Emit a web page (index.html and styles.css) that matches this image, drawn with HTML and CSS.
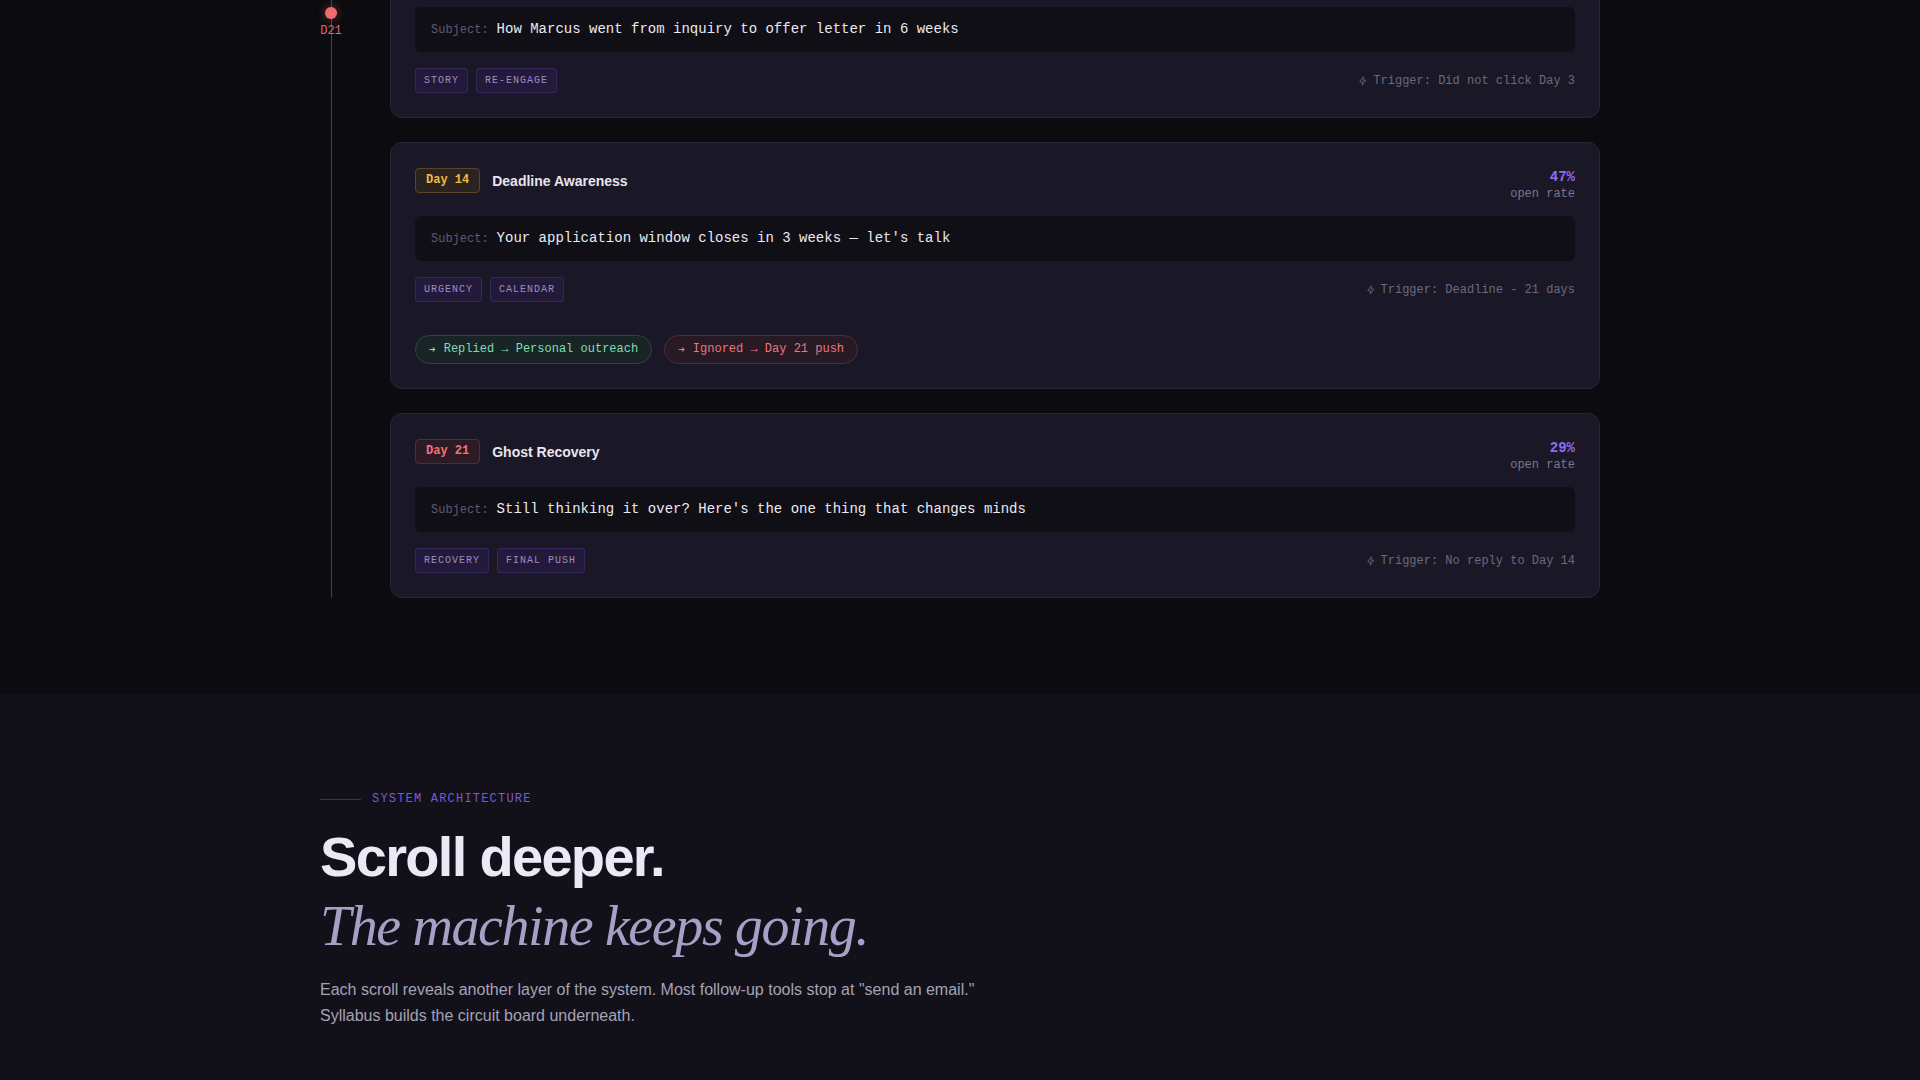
FILE: index.html
```html
<!DOCTYPE html>
<html>

<head>
    <meta charset="utf-8">
    <meta name="viewport" content="width=device-width, initial-scale=1.0">
    <title>Syllabus - Follow-up sequence</title>
    <link rel="stylesheet" href="styles.css">
</head>

<body>
    <section class="sequence">
        <div class="flow">
            <div class="timeline">
                <div class="marker">
                    <span class="dot"></span>
                    <span class="marker-label">D21</span>
                </div>
            </div>

            <div class="cards">
                <div class="card">
                    <div class="card-head">
                        <div class="card-title">
                            <span class="badge badge-blue">Day 7</span>
                            <h3>Success Story</h3>
                        </div>
                        <div class="rate">
                            <b>58%</b>
                            <span>open rate</span>
                        </div>
                    </div>
                    <div class="subject"><span class="subject-label">Subject:</span>How Marcus went from inquiry to offer letter in 6 weeks</div>
                    <div class="card-foot">
                        <div class="tags">
                            <span class="tag">Story</span>
                            <span class="tag">Re-engage</span>
                        </div>
                        <div class="trigger">
                            <svg viewBox="0 0 24 24"><path d="M13 2 4 14h7l-1 8 9-12h-7l1-8z"/></svg>
                            Trigger: Did not click Day 3
                        </div>
                    </div>
                </div>

                <div class="card">
                    <div class="card-head">
                        <div class="card-title">
                            <span class="badge badge-amber">Day 14</span>
                            <h3>Deadline Awareness</h3>
                        </div>
                        <div class="rate">
                            <b>47%</b>
                            <span>open rate</span>
                        </div>
                    </div>
                    <div class="subject"><span class="subject-label">Subject:</span>Your application window closes in 3 weeks — let's talk</div>
                    <div class="card-foot">
                        <div class="tags">
                            <span class="tag">Urgency</span>
                            <span class="tag">Calendar</span>
                        </div>
                        <div class="trigger">
                            <svg viewBox="0 0 24 24"><path d="M13 2 4 14h7l-1 8 9-12h-7l1-8z"/></svg>
                            Trigger: Deadline - 21 days
                        </div>
                    </div>
                    <div class="branches">
                        <span class="branch branch-yes"><i>➔</i>Replied → Personal outreach</span>
                        <span class="branch branch-no"><i>➔</i>Ignored → Day 21 push</span>
                    </div>
                </div>

                <div class="card">
                    <div class="card-head">
                        <div class="card-title">
                            <span class="badge badge-red">Day 21</span>
                            <h3>Ghost Recovery</h3>
                        </div>
                        <div class="rate">
                            <b>29%</b>
                            <span>open rate</span>
                        </div>
                    </div>
                    <div class="subject"><span class="subject-label">Subject:</span>Still thinking it over? Here's the one thing that changes minds</div>
                    <div class="card-foot">
                        <div class="tags">
                            <span class="tag">Recovery</span>
                            <span class="tag">Final push</span>
                        </div>
                        <div class="trigger">
                            <svg viewBox="0 0 24 24"><path d="M13 2 4 14h7l-1 8 9-12h-7l1-8z"/></svg>
                            Trigger: No reply to Day 14
                        </div>
                    </div>
                </div>
            </div>
        </div>
    </section>

    <section class="architecture">
        <div class="wrap">
            <div class="eyebrow"><span class="eyebrow-line"></span>System Architecture</div>
            <h2>Scroll deeper.<em>The machine keeps going.</em></h2>
            <p>Each scroll reveals another layer of the system. Most follow-up tools stop at "send an email."
                Syllabus builds the circuit board underneath.</p>
        </div>
    </section>
</body>

</html>
```

FILE: styles.css
```css
html {
    background: #0c0b10;
}

body {
    margin: 0;
    font-family: "Liberation Sans", Arial, sans-serif;
    color: #e8e5f0;
}

.sequence {
    background: #0c0b10;
    padding-bottom: 96px;
    overflow: hidden;
}

.flow {
    width: 1280px;
    margin: -67px auto 0;
    display: grid;
    grid-template-columns: 22px 1fr;
    column-gap: 48px;
}

.timeline {
    background: linear-gradient(#43387e, #43387e) center / 1px 100% no-repeat;
    padding-top: 74px;
}

.marker {
    display: flex;
    flex-direction: column;
    align-items: center;
    gap: 5px;
}

.dot {
    width: 12px;
    height: 12px;
    border-radius: 50%;
    background: #f26b6e;
    box-shadow: 0 0 10px rgba(242, 107, 110, 0.45);
}

.marker-label {
    font-family: "Liberation Mono", monospace;
    font-size: 12px;
    line-height: 14px;
    color: #e0686c;
}

.cards {
    display: flex;
    flex-direction: column;
    gap: 24px;
}

.card {
    background: #1a1826;
    border: 1px solid #282539;
    border-radius: 12px;
    padding: 24px;
}

.card-head {
    display: flex;
    justify-content: space-between;
    align-items: flex-start;
    padding-top: 1px;
    margin-bottom: 13px;
}

.card-title {
    display: flex;
    align-items: center;
    gap: 12px;
}

.card-title h3 {
    margin: 0;
    font-size: 14px;
    font-weight: 600;
    color: #e8e5f0;
}

.badge {
    font-family: "Liberation Mono", monospace;
    font-size: 12px;
    font-weight: bold;
    line-height: 15px;
    padding: 4px 10px;
    border: 1px solid;
    border-radius: 4px;
}

.badge-amber {
    color: #f4b63c;
    background: #2a231f;
    border-color: #584427;
}

.badge-red {
    color: #f0737a;
    background: #2c1b25;
    border-color: #5a2934;
}

.badge-blue {
    color: #7aa8f5;
    background: #1b2133;
    border-color: #2c3b60;
}

.rate {
    display: flex;
    flex-direction: column;
    align-items: flex-end;
    font-family: "Liberation Mono", monospace;
}

.rate b {
    font-size: 14px;
    line-height: 18px;
    color: #8f6cf2;
}

.rate span {
    font-size: 12px;
    line-height: 17px;
    color: #7a7690;
}

.subject {
    background: #100f16;
    border-radius: 6px;
    padding: 12px 16px;
    font-family: "Liberation Mono", monospace;
    font-size: 14px;
    line-height: 20px;
    color: #ece9f3;
}

.subject-label {
    font-size: 12px;
    color: #5e5b70;
    margin-right: 8px;
}

.card-foot {
    display: flex;
    justify-content: space-between;
    align-items: center;
    margin-top: 16px;
}

.tags {
    display: flex;
    gap: 8px;
}

.tag {
    font-family: "Liberation Mono", monospace;
    font-size: 10px;
    line-height: 15px;
    letter-spacing: 1px;
    text-transform: uppercase;
    color: #9b8fc2;
    background: #231a3b;
    border: 1px solid #34285a;
    border-radius: 3px;
    padding: 4px 8px;
}

.trigger {
    display: flex;
    align-items: center;
    gap: 5px;
    font-family: "Liberation Mono", monospace;
    font-size: 12px;
    color: #6b6880;
}

.trigger svg {
    width: 10px;
    height: 10px;
    fill: none;
    stroke: #6b6880;
    stroke-width: 2;
    stroke-linejoin: round;
}

.branches {
    display: flex;
    gap: 12px;
    margin-top: 33px;
}

.branch {
    display: flex;
    align-items: center;
    gap: 8px;
    font-family: "Liberation Mono", monospace;
    font-size: 12px;
    line-height: 17px;
    padding: 5px 13px;
    border: 1px solid;
    border-radius: 999px;
}

.branch i {
    font-style: normal;
    font-family: "DejaVu Sans", sans-serif;
    font-size: 8px;
}

.branch-yes {
    color: #7fdcb4;
    background: #192426;
    border-color: #2d4642;
}

.branch-no {
    color: #ee7480;
    background: #281a25;
    border-color: #542a38;
}

.architecture {
    background: #12111a;
    padding: 96px 0 120px;
}

.wrap {
    width: 1280px;
    margin: 0 auto;
}

.eyebrow {
    display: flex;
    align-items: center;
    gap: 11px;
    font-family: "Liberation Mono", monospace;
    font-size: 12px;
    line-height: 18px;
    letter-spacing: 1.2px;
    text-transform: uppercase;
    color: #7b58d8;
    margin-bottom: 15px;
}

.eyebrow-line {
    width: 41px;
    height: 1px;
    background: #3a2f6c;
}

h2 {
    margin: 0 0 17px;
    font-size: 56px;
    line-height: 1.2;
    font-weight: bold;
    letter-spacing: -0.03em;
    color: #ece8f5;
}

h2 em {
    display: block;
    margin-top: 3px;
    font-family: "Liberation Serif", "Times New Roman", serif;
    font-weight: normal;
    letter-spacing: -0.025em;
    color: #a79fc6;
}

p {
    margin: 0;
    max-width: 680px;
    font-size: 16px;
    line-height: 1.6;
    color: #a6a2b6;
}
```
